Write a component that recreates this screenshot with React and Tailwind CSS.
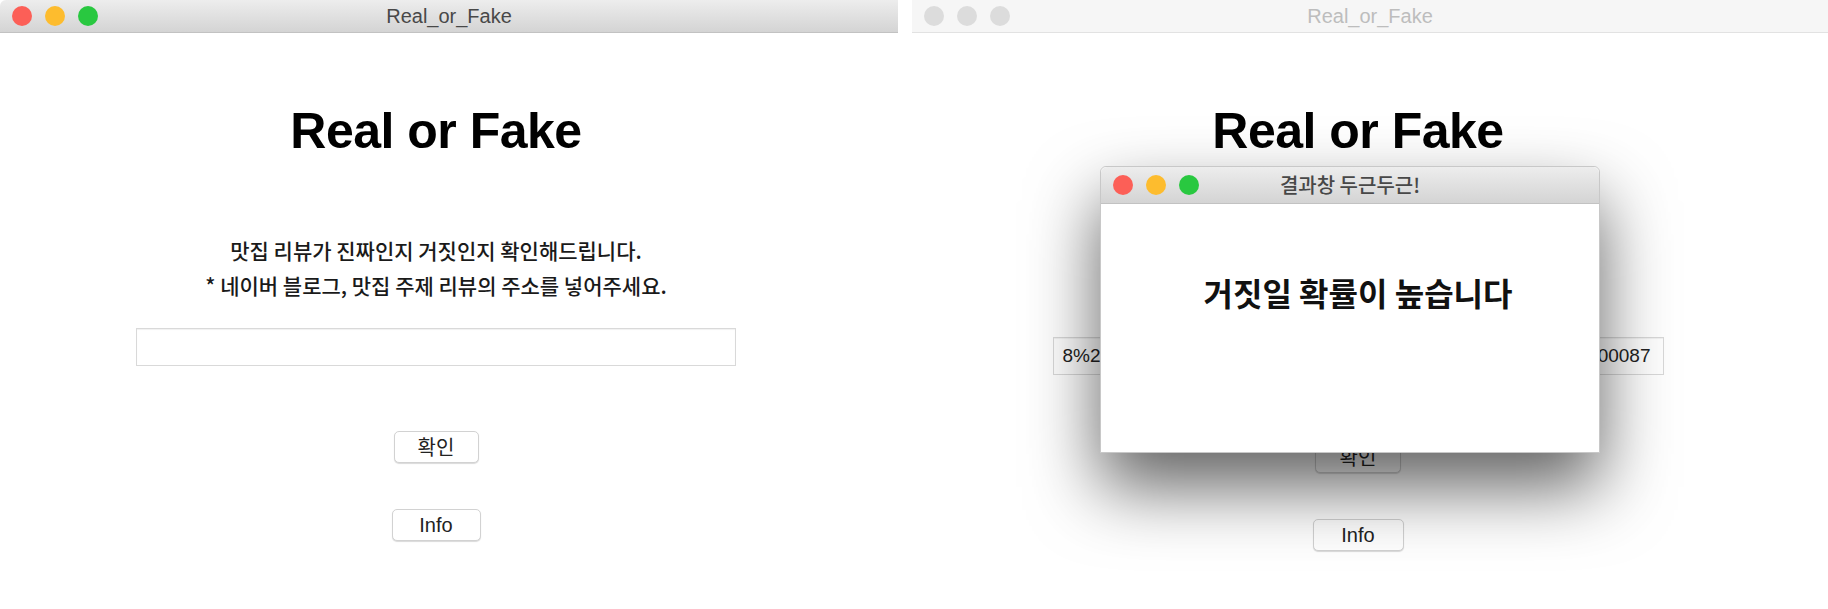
const sans = "font-['Liberation_Sans','Noto_Sans_CJK_KR',sans-serif]";
const kr = "font-['Noto_Sans_CJK_KR','Liberation_Sans',sans-serif]";

function Lights({ active = true }) {
  const colors = active ? ['bg-[#fc5f57]', 'bg-[#fdbc2e]', 'bg-[#29c840]'] : ['bg-[#dcdcdc]', 'bg-[#dcdcdc]', 'bg-[#dcdcdc]'];
  return (
    <div className="flex items-center gap-[13px] pl-[12px]">
      {colors.map((c, i) => (
        <span key={i} className={`w-[20px] h-[20px] rounded-full ${c}`} />
      ))}
    </div>
  );
}

function TitleBar({ title, active = true, titleClass = 'text-[20px]', h = 'h-[33px]' }) {
  return (
    <div
      className={`${h} grid grid-cols-[1fr_auto_1fr] items-center ${
        active
          ? 'bg-gradient-to-b from-[#ededed] to-[#d4d4d4] border-b border-[#c2c2c2]'
          : 'bg-[#f6f6f6] border-b border-[#e2e2e2]'
      }`}
    >
      <Lights active={active} />
      <span className={`${titleClass} ${active ? 'text-[#484848]' : 'text-[#bdbdbd]'} leading-none`}>{title}</span>
      <span />
    </div>
  );
}

function MacButton({ children, w }) {
  return (
    <div
      className={`${w} h-[32px] flex items-center justify-center rounded-[5px] bg-white border border-[#d2d2d2] shadow-[0_1px_1px_rgba(0,0,0,0.15)] text-[20px] text-[#222]`}
    >
      {children}
    </div>
  );
}

function MainBody({ url, hidden, inputTop, inputW }) {
  return (
    <div className="flex flex-col items-center">
      <h1 className="mt-[73px] text-[50px] leading-none font-bold text-black tracking-[-0.5px]">Real or Fake</h1>
      <div className={`${kr} mt-[77px] text-[21px] leading-[35px] font-medium text-[#1a1a1a] text-center ${hidden ? 'invisible' : ''}`}>
        <p>맛집 리뷰가 진짜인지 거짓인지 확인해드립니다.</p>
        <p>* 네이버 블로그, 맛집 주제 리뷰의 주소를 넣어주세요.</p>
      </div>
      <div className={`${inputTop} ${inputW} h-[38px] border border-[#d9d9d9] shadow-[inset_0_1px_1px_rgba(0,0,0,0.06)] bg-white flex items-center justify-between pl-[9px] pr-[12px] overflow-hidden whitespace-nowrap text-[19px] text-[#222]`}>
        {url && (
          <>
            <span>8%2C%EB%A7%9B%EC%A7%91</span>
            <span>logNo=221450000087</span>
          </>
        )}
      </div>
    </div>
  );
}

export default function App() {
  return (
    <div className={`${sans} w-[1828px] h-[609px] bg-white flex gap-[14px] overflow-hidden`}>
      {/* active window */}
      <div className="w-[898px] flex flex-col">
        <div className="rounded-tl-[6px] overflow-hidden">
          <TitleBar title="Real_or_Fake" />
        </div>
        <div className="w-[872px]">
          <MainBody inputTop="mt-[25px]" inputW="w-[600px]" />
          <div className="flex flex-col items-center">
            <div className="mt-[65px]">
              <MacButton w="w-[85px]">
                <span className={kr}>확인</span>
              </MacButton>
            </div>
            <div className="mt-[46px]">
              <MacButton w="w-[89px]">Info</MacButton>
            </div>
          </div>
        </div>
      </div>

      {/* inactive window with result popup */}
      <div className="relative w-[916px] flex flex-col">
        <TitleBar title="Real_or_Fake" active={false} />
        <div className="w-[892px]">
          <MainBody url hidden inputTop="mt-[34px]" inputW="w-[611px]" />
          <div className="flex flex-col items-center">
            <div className="mt-[66px]">
              <MacButton w="w-[86px]">
                <span className={kr}>확인</span>
              </MacButton>
            </div>
            <div className="mt-[46px]">
              <MacButton w="w-[91px]">Info</MacButton>
            </div>
          </div>
        </div>

        <div className="absolute left-[188px] top-[166px] w-[500px] h-[287px] flex flex-col bg-white rounded-t-[6px] border border-[#c8c8c8] shadow-[0_34px_70px_rgba(0,0,0,0.62)]">
          <div className="rounded-t-[6px] overflow-hidden">
            <TitleBar title="결과창 두근두근!" h="h-[37px]" titleClass={`${kr} text-[20px] font-medium`} />
          </div>
          <div className="flex-1 flex justify-center pl-[16px]">
            <p className={`${kr} mt-[72px] text-[32px] leading-none font-bold text-[#111]`}>거짓일 확률이 높습니다</p>
          </div>
        </div>
      </div>
    </div>
  );
}
